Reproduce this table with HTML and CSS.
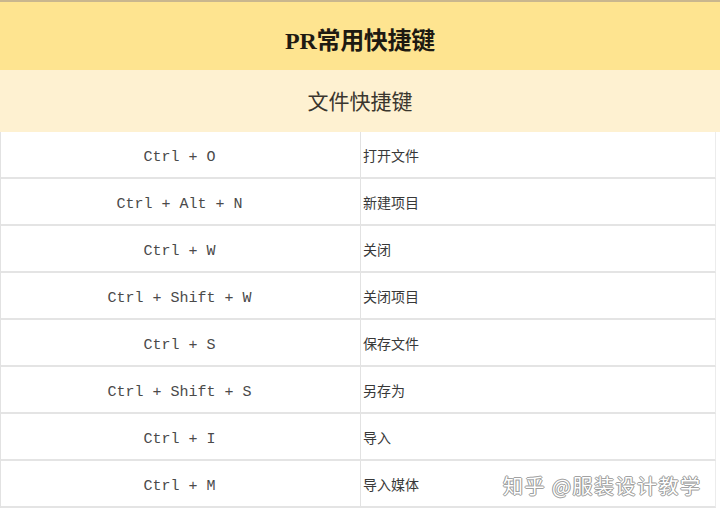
FILE: index.html
```html
<!DOCTYPE html>
<html lang="zh">
<head>
<meta charset="utf-8">
<link rel="stylesheet" href="styles.css">
</head>
<body>
<div class="sheet">
  <div class="title">PR常用快捷键</div>
  <div class="subtitle">文件快捷键</div>
  <div class="rows">
    <div class="key">Ctrl + O</div><div class="desc">打开文件</div>
    <div class="key">Ctrl + Alt + N</div><div class="desc">新建项目</div>
    <div class="key">Ctrl + W</div><div class="desc">关闭</div>
    <div class="key">Ctrl + Shift + W</div><div class="desc">关闭项目</div>
    <div class="key">Ctrl + S</div><div class="desc">保存文件</div>
    <div class="key">Ctrl + Shift + S</div><div class="desc">另存为</div>
    <div class="key">Ctrl + I</div><div class="desc">导入</div>
    <div class="key">Ctrl + M</div><div class="desc">导入媒体</div>
  </div>
  <div class="watermark">知乎 @服装设计教学</div>
</div>
</body>
</html>
```

FILE: styles.css
```css
html, body {
  margin: 0;
  padding: 0;
  background: #ffffff;
}
.sheet {
  position: relative;
  width: 720px;
  height: 510px;
  overflow: hidden;
  border-top: 2px solid #c9b68e;
  box-sizing: border-box;
}
.title {
  height: 68px;
  background: #fee490;
  display: flex;
  align-items: center;
  justify-content: center;
  font-family: "Liberation Serif", "Noto Sans CJK SC", serif;
  font-weight: bold;
  font-size: 24px;
  color: #1e1a12;
  letter-spacing: -0.3px;
  padding-top: 4px;
  box-sizing: border-box;
}
.subtitle {
  height: 62px;
  background: #fef1d1;
  display: flex;
  align-items: center;
  justify-content: center;
  font-family: "Noto Sans CJK SC", sans-serif;
  font-size: 21px;
  color: #3a362e;
  padding-bottom: 2px;
  box-sizing: border-box;
}
.rows {
  display: grid;
  grid-template-columns: 360px 1fr;
  grid-auto-rows: 47px;
  border-left: 1px solid #e2e2e2;
}
.key, .desc {
  border-bottom: 2px solid #e4e4e4;
  display: flex;
  align-items: center;
  box-sizing: border-box;
  color: #383838;
}
.key {
  justify-content: center;
  font-family: "Liberation Mono", "DejaVu Sans Mono", monospace;
  font-size: 15px;
  color: #4a4a4a;
  border-right: 1px solid #e2e2e2;
  padding-right: 2px;
  padding-top: 5px;
}
.desc {
  padding-left: 2px;
  font-family: "Noto Sans CJK SC", sans-serif;
  font-size: 14px;
  border-right: 1px solid #ececec;
  margin-right: 4px;
}
.watermark {
  position: absolute;
  left: 503px;
  top: 469px;
  font-family: "Noto Sans CJK SC", sans-serif;
  font-size: 20px;
  color: #ffffff;
  letter-spacing: 1.5px;
  text-shadow: 0 0 1px #888, 0 0 1px #888, 1px 0 0 #aaa, -1px 0 0 #aaa, 0 1px 0 #aaa, 0 -1px 0 #aaa;
}
```
